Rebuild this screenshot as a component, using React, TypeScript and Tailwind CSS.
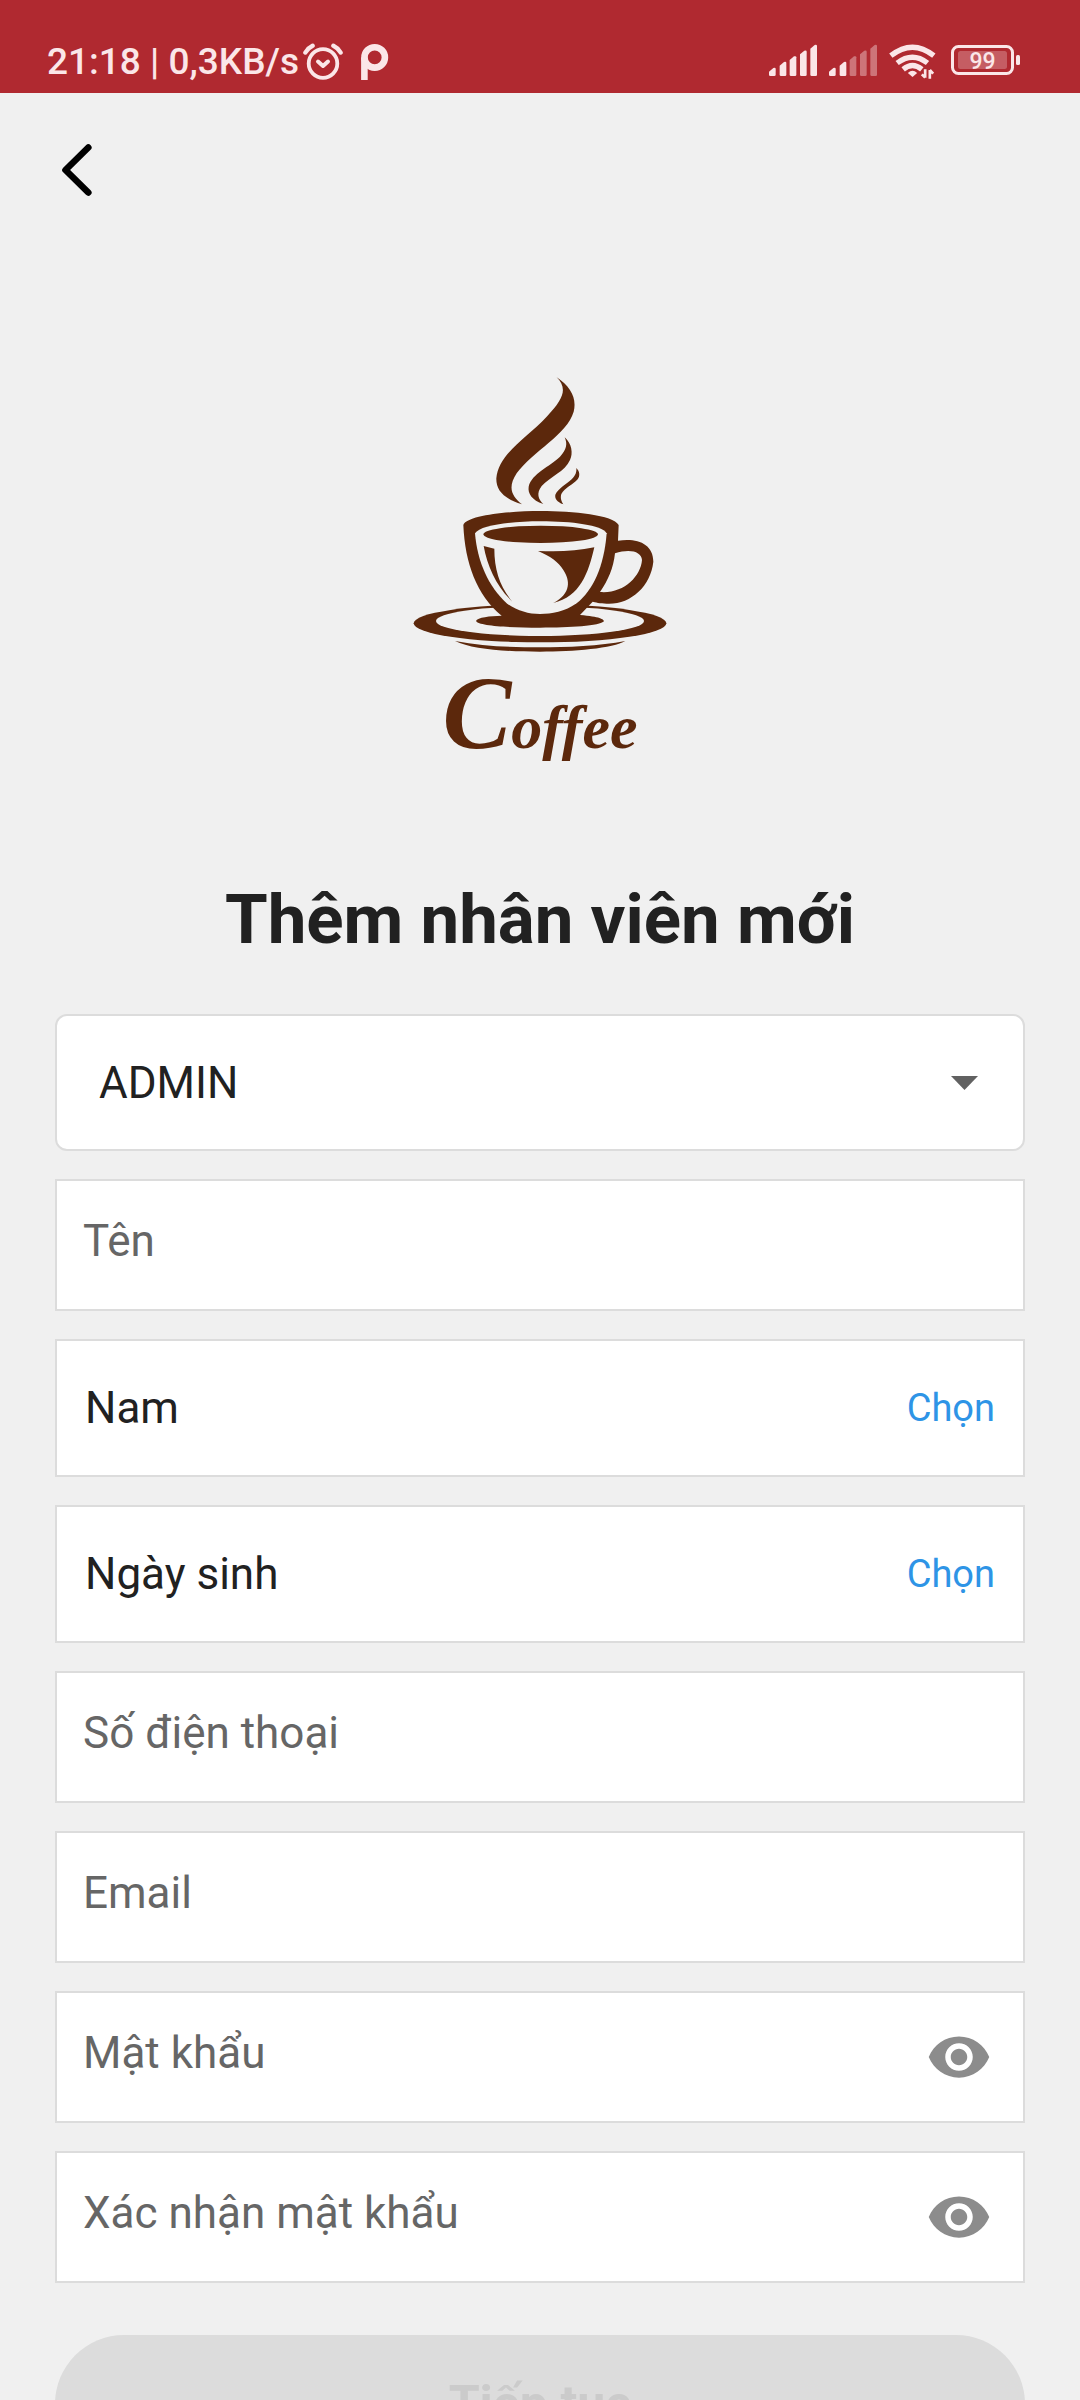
import { useState } from "react";
import type { ReactNode } from "react";

function SignalIcon({ level, label }: { level: number; label: string }) {
  const bars = [
    { x: 0, top: 72 },
    { x: 32, top: 54 },
    { x: 62, top: 37 },
    { x: 93, top: 20 },
    { x: 124, top: 3 },
  ];
  return (
    <svg viewBox="0 -12 144 120" className="h-10 w-12" role="img" aria-label={label} fill="#fbe6e8">
      {bars.map((bar, i) => (
        <path
          key={bar.x}
          opacity={i < level ? 1 : 0.4}
          d={`M${bar.x} ${bar.top + 11} L${bar.x + 13} ${bar.top} Q${bar.x + 20} ${bar.top - 2} ${bar.x + 20} ${bar.top + 3} V92 Q${bar.x + 20} 96 ${bar.x + 16} 96 H${bar.x + 4} Q${bar.x} 96 ${bar.x} 92 Z`}
        />
      ))}
    </svg>
  );
}

function AlarmIcon() {
  return (
    <svg viewBox="0 0 40 40" className="size-10" role="img" aria-label="Alarm" fill="none" stroke="#fbe6e8" strokeLinecap="round" strokeLinejoin="round">
      <circle cx="20" cy="21.5" r="14.3" strokeWidth="3.8" />
      <path d="M15 19.5 L20 24 L25 19.5" strokeWidth="4" />
      <path d="M2.4 10.5 Q5 6 9.6 3.8 M37.6 10.5 Q35 6 30.4 3.8" strokeWidth="4.4" />
    </svg>
  );
}

function ParkingIcon() {
  return (
    <svg viewBox="0 0 28 40" className="h-10 w-7" role="img" aria-label="P" fill="none" stroke="#fbe6e8" strokeWidth="6.6">
      <circle cx="13.7" cy="15.4" r="10.2" />
      <path d="M3.4 15.4 V38" />
    </svg>
  );
}

function WifiIcon() {
  return (
    <svg viewBox="0 -20 140 120" className="h-10 w-[47px]" role="img" aria-label="Wi-Fi" fill="none" stroke="#fbe6e8" strokeWidth="16">
      <path d="M5 27 Q70 -24 134 27" />
      <path d="M24 49 Q70 14 115 49" />
      <path d="M42 68 Q70 45 98 68" />
      <path d="M70 91 L56 79 Q70 65 84 79 Z" fill="#fbe6e8" stroke="none" />
      <path d="M108 68 V93 M108 93 L98 83 M122 96 V70 M122 70 L132 81" strokeWidth="8" />
    </svg>
  );
}

function BatteryIcon() {
  return (
    <svg viewBox="0 0 69 40" className="h-10 w-[69px]" role="img" aria-label="Battery 99%">
      <rect x="1.5" y="6.5" width="60" height="27" rx="6" fill="none" stroke="#fbe6e8" strokeWidth="3" />
      <rect x="7" y="11" width="49" height="18" rx="2.5" fill="#fbe6e8" opacity="0.28" />
      <rect x="65" y="15" width="4" height="10" rx="1.5" fill="#fbe6e8" />
      <text x="31.5" y="29" textAnchor="middle" fontFamily="Roboto, sans-serif" fontWeight="500" fontSize="23" fill="#fbe6e8">
        99
      </text>
    </svg>
  );
}

function StatusBar() {
  return (
    <header className="flex h-[93px] shrink-0 items-start justify-between bg-[#b02930] pt-10 pr-[60px] pl-[47px] text-[#fbe6e8]">
      <div className="flex items-center">
        <span className="text-[37px] leading-[44px] font-medium whitespace-nowrap">21:18 | 0,3KB/s</span>
        <div className="ml-1 flex items-center gap-[18px]">
          <AlarmIcon />
          <ParkingIcon />
        </div>
      </div>
      <div className="flex items-center gap-3">
        <SignalIcon level={5} label="SIM 1" />
        <SignalIcon level={2} label="SIM 2" />
        <WifiIcon />
        <div className="pl-[3px]">
          <BatteryIcon />
        </div>
      </div>
    </header>
  );
}

function CoffeeLogo() {
  return (
    <svg viewBox="0 0 840 1290" className="mx-auto h-[430px] w-[280px]" role="img" aria-label="Coffee" fill="#5c280c">
      <path d="M470 52 C512 80 531 115 521 155 C500 225 400 272 350 340 C322 383 335 408 366 433 C310 416 288 390 289 355 C295 280 380 235 440 170 C492 115 503 85 470 52Z" />
      <path d="M494 232 C515 250 520 280 510 300 C495 335 450 350 425 378 C408 400 415 418 430 432 C395 420 383 400 386 380 C395 340 450 320 480 290 C500 268 503 252 494 232Z" />
      <path d="M529 324 C540 335 540 348 533 358 C518 375 495 383 484 402 C480 415 485 425 490 433 C470 425 464 415 466 404 C475 385 500 372 515 358 C528 345 530 335 529 324Z" />
      <g transform="translate(0 390)">
        <ellipse cx="420" cy="400" rx="379" ry="57" />
        <ellipse cx="420" cy="393" rx="312" ry="45" fill="#f0f0f0" />
        <path d="M190 105 C200 75 330 63 422 63 C520 63 640 75 656 105 L654 152 C710 143 760 160 760 215 C752 290 690 345 620 341 C600 340 585 337 578 335 L540 375 C600 380 612 388 612 394 C600 408 510 413 420 413 C330 413 235 408 228 393 C232 382 270 378 305 377 C230 315 195 220 190 105Z" />
        <path d="M225 130 C240 105 330 94 422 94 C515 94 605 105 620 130 C612 230 580 300 530 340 C495 365 455 372 420 372 C385 372 350 362 320 340 C265 290 232 215 225 130Z" fill="#f0f0f0" />
        <path d="M645 190 C690 175 725 185 726 210 C722 260 670 312 600 306 C625 270 640 235 645 190Z" fill="#f0f0f0" />
        <ellipse cx="422" cy="133" rx="172" ry="26" />
        <path d="M251 168 L283 176 C283 240 300 290 337 335 C290 290 262 230 251 168Z" />
        <path d="M414 183 C480 186 530 183 583 172 C565 250 540 320 460 339 C515 310 510 270 490 240 C475 215 450 198 414 183Z" />
        <path d="M165 453 C250 470 340 472 420 472 C500 472 600 468 676 453 C640 475 520 485 420 485 C320 485 215 478 165 453Z" />
      </g>
      <text x="420" y="1165" textAnchor="middle" fontFamily="'Liberation Serif', serif" fontStyle="italic" fontWeight="700">
        <tspan fontSize="310">C</tspan>
        <tspan fontSize="186">offee</tspan>
      </text>
    </svg>
  );
}

function EyeIcon() {
  return (
    <svg viewBox="0 0 24 24" className="size-[66px]" fill="#8c8c8c" aria-hidden="true">
      <path d="M12 4.5C7 4.5 2.73 7.61 1 12c1.73 4.39 6 7.5 11 7.5s9.27-3.11 11-7.5c-1.73-4.39-6-7.5-11-7.5zM12 17c-2.76 0-5-2.24-5-5s2.24-5 5-5 5 2.24 5 5-2.24 5-5 5zm0-8c-1.66 0-3 1.34-3 3s1.34 3 3 3 3-1.34 3-3-1.34-3-3-3z" />
    </svg>
  );
}

function Field({ type, label, children }: { type: string; label: string; children?: ReactNode }) {
  return (
    <div className="flex h-[132px] items-center border-2 border-[#dcdcdc] bg-white pr-[31px]">
      <input
        type={type}
        aria-label={label}
        placeholder={label}
        className="h-full min-w-0 flex-1 bg-transparent pb-2 pl-[26px] text-[44px] text-[#212121] outline-none placeholder:text-[#666666]"
      />
      {children}
    </div>
  );
}

function PasswordField({ label }: { label: string }) {
  const [visible, setVisible] = useState(false);
  return (
    <Field type={visible ? "text" : "password"} label={label}>
      <button type="button" aria-label={`Hiện ${label}`} onClick={() => setVisible(!visible)}>
        <EyeIcon />
      </button>
    </Field>
  );
}

function PickerRow({ value }: { value: string }) {
  return (
    <div className="flex h-[138px] items-center justify-between border-2 border-[#dcdcdc] bg-white px-7">
      <span className="text-[44px] text-[#212121]">{value}</span>
      <button type="button" className="text-[38px] text-[#2e94e6]">
        Chọn
      </button>
    </div>
  );
}

export default function App() {
  return (
    <div className="flex h-screen flex-col bg-[#f0f0f0] font-[Roboto,sans-serif]">
      <StatusBar />
      <main className="min-h-0 flex-1 overflow-y-auto px-[55px] pt-12 pb-14 [scrollbar-width:none]">
        <button type="button" aria-label="Quay lại" className="block">
          <svg viewBox="0 0 44 58" className="h-[58px] w-11" fill="none" stroke="#000" strokeWidth="6.6" strokeLinecap="round" strokeLinejoin="round">
            <path d="M33.3 6.5 L10.5 29 L33.3 51.5" />
          </svg>
        </button>
        <div className="pt-[161px]">
          <CoffeeLogo />
        </div>
        <h1 className="pt-[90px] text-center text-[69px] leading-[80px] font-bold text-[#212121]">Thêm nhân viên mới</h1>
        <form className="flex flex-col gap-7 pt-[54px]" onSubmit={(e) => e.preventDefault()}>
          <div className="relative">
            <select
              aria-label="Vai trò"
              className="block h-[137px] w-full appearance-none rounded-xl border-2 border-[#dcdcdc] bg-white pr-24 pl-[42px] text-[44px] text-[#212121]"
            >
              <option>ADMIN</option>
            </select>
            <svg viewBox="0 0 27 14" className="pointer-events-none absolute top-1/2 right-[47px] h-3.5 w-[27px] -translate-y-1/2" fill="#616161" aria-hidden="true">
              <path d="M0 0 H27 L13.5 14 Z" />
            </svg>
          </div>
          <Field type="text" label="Tên" />
          <PickerRow value="Nam" />
          <PickerRow value="Ngày sinh" />
          <Field type="tel" label="Số điện thoại" />
          <Field type="email" label="Email" />
          <PasswordField label="Mật khẩu" />
          <PasswordField label="Xác nhận mật khẩu" />
          <button type="submit" disabled className="mt-6 h-[138px] shrink-0 rounded-full bg-[#dcdcdc] text-[50px] font-bold text-[#cbcbcb]">
            Tiếp tục
          </button>
        </form>
      </main>
    </div>
  );
}
